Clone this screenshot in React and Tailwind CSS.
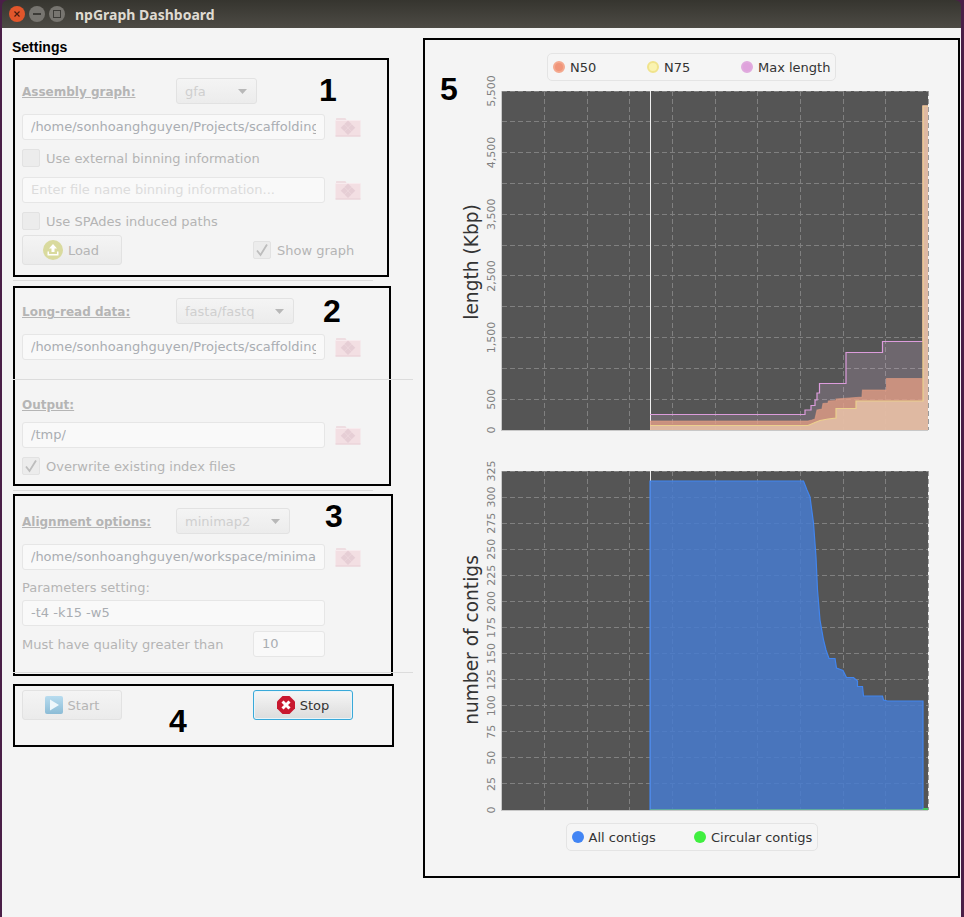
import React from "react";

const UI = "font-['DejaVu_Sans',sans-serif]";

function FolderIcon() {
  return (
    <svg width="26" height="20" viewBox="0 0 26 20" className="ml-[10px] shrink-0">
      <path d="M1 3 L1 1.5 Q1 1 2 1 L10 1 Q11 1 11.5 3 Z" fill="#eedde1" />
      <rect x="0.5" y="3" width="25" height="16.5" rx="1" fill="#f3dfe3" />
      <rect x="0.5" y="3" width="25" height="1" fill="#f8ebee" />
      <rect x="0.5" y="18.5" width="25" height="1" fill="#e8d0d6" />
      <g fill="#e6ced5">
        <rect x="10.5" y="4.5" width="5" height="5" transform="rotate(45 13 7)" />
        <rect x="10.5" y="12" width="5" height="5" transform="rotate(45 13 14.5)" />
        <rect x="6.8" y="8.3" width="5" height="5" transform="rotate(45 9.3 10.8)" />
        <rect x="14.2" y="8.3" width="5" height="5" transform="rotate(45 16.7 10.8)" />
      </g>
    </svg>
  );
}

function Field({ text, placeholder, className = "w-[303px]" }) {
  return (
    <div className={`${className} h-[26px] shrink-0 rounded-[3px] border border-[#e6e6e6] bg-[#f9f9f9] px-[8px] flex items-center overflow-hidden`}>
      <span className={`whitespace-nowrap overflow-hidden text-[13px] ${placeholder ? "text-[#dcdcdc]" : "text-[#a9adb2]"}`}>
        {text}
      </span>
    </div>
  );
}

function Combo({ text, className }) {
  return (
    <div className={`${className} h-[26px] rounded-[3px] border border-[#e2e2e2] bg-gradient-to-b from-[#f4f4f4] to-[#ececec] pl-[8px] pr-[9px] flex items-center justify-between`}>
      <span className="text-[13px] text-[#cfcfcf] pt-[2px]">{text}</span>
      <svg width="9" height="5" viewBox="0 0 9 5"><path d="M0 0H9L4.5 5Z" fill="#b8b8b8" /></svg>
    </div>
  );
}

function Check({ label, checked }) {
  return (
    <div className="flex items-center h-[18px]">
      <div className="w-[18px] h-[18px] rounded-[2px] border border-[#e2e2e2] bg-[#ececec] flex items-center justify-center">
        {checked && (
          <svg width="14" height="14" viewBox="0 0 14 14">
            <path d="M2 7.5 L5.5 12 L12 1.5" fill="none" stroke="#bdbdbd" strokeWidth="1.8" />
          </svg>
        )}
      </div>
      <span className="ml-[6px] pt-[2px] text-[13px] text-[#b4b4b4] whitespace-nowrap">{label}</span>
    </div>
  );
}

function GroupLabel({ text, w }) {
  return (
    <span className={`${w} pt-[2px] text-[12px] font-bold underline text-[#b5b5b5] whitespace-nowrap`}>{text}</span>
  );
}

function Button({ icon, label, focus, className = "" }) {
  return (
    <div
      className={`${className} w-[100px] h-[30px] rounded-[3px] flex items-center justify-center gap-[5px] bg-gradient-to-b ${
        focus
          ? "border border-[#39a9d9] from-[#f6f6f6] to-[#dcdcdc] shadow-[inset_0_0_0_1px_#e8f4f9]"
          : "border border-[#e2e2e2] from-[#f4f4f4] to-[#ebebeb]"
      }`}
    >
      {icon}
      <span className={`pt-[2px] text-[13px] ${focus ? "text-[#333]" : "text-[#b5b5b5]"}`}>{label}</span>
    </div>
  );
}

function LoadIcon() {
  return (
    <svg width="20" height="20" viewBox="0 0 20 20" className="ml-[-2px]">
      <circle cx="10" cy="10" r="10" fill="#d9da9e" />
      <path d="M10 4 L14 8.5 H11.5 V12 H8.5 V8.5 H6 Z" fill="#fff" />
      <path d="M4.5 11.5 H6 V14 H14 V11.5 H15.5 V15.5 H4.5 Z" fill="#fff" />
    </svg>
  );
}

function PlayIcon() {
  return (
    <svg width="18" height="18" viewBox="0 0 18 18">
      <defs>
        <linearGradient id="pl" x1="0" y1="0" x2="0" y2="1">
          <stop offset="0" stopColor="#b8dcef" />
          <stop offset="1" stopColor="#8cbcd6" />
        </linearGradient>
      </defs>
      <rect x="0" y="0" width="18" height="18" rx="2" fill="url(#pl)" />
      <path d="M5 3.5 L14 9 L5 14.5 Z" fill="#eef7fb" />
    </svg>
  );
}

function StopIcon() {
  return (
    <svg width="18" height="18" viewBox="0 0 18 18">
      <path d="M5.5 0 H12.5 L18 5.5 V12.5 L12.5 18 H5.5 L0 12.5 V5.5 Z" fill="#c8182f" />
      <path d="M5.5 5.5 L12.5 12.5 M12.5 5.5 L5.5 12.5" stroke="#fff" strokeWidth="3" />
    </svg>
  );
}

function Num({ children, className }) {
  return (
    <span className={`absolute font-['Liberation_Sans',sans-serif] font-bold text-[32px] leading-none text-black ${className}`}>
      {children}
    </span>
  );
}

function Rule({ className }) {
  return <div className={`h-px bg-[#dcdcdc] ${className}`} />;
}

const VX = [544.5, 587.5, 629.5, 672.5, 715.5, 757.5, 800.5, 843.5, 885.5];

function Grid({ top, bottom, n }) {
  const step = (bottom - top) / n;
  const ys = Array.from({ length: n }, (_, i) => top + step * i);
  return (
    <g stroke="#808080" strokeWidth="1" strokeDasharray="5 3" shapeRendering="crispEdges">
      {ys.map((y) => (
        <line key={y} x1="502" x2="928" y1={y} y2={y} />
      ))}
      {VX.map((x) => (
        <line key={x} x1={x} x2={x} y1={top} y2={bottom} />
      ))}
      <line x1="928" x2="928" y1={top} y2={bottom} stroke="#9a9a9a" />
    </g>
  );
}

function TickLabel({ y, text }) {
  return (
    <text
      x="0"
      y="0"
      transform={`translate(495 ${y}) rotate(-90)`}
      textAnchor="middle"
      fontFamily="'DejaVu Sans', sans-serif"
      fontSize="11"
      fill="#808080"
    >
      {text}
    </text>
  );
}

function AxisTitle({ y, text }) {
  return (
    <text
      x="0"
      y="0"
      transform={`translate(478 ${y}) rotate(-90)`}
      textAnchor="middle"
      fontFamily="'DejaVu Sans', sans-serif"
      fontSize="18.6"
      fill="#333"
    >
      {text}
    </text>
  );
}

const pts = (a) => a.map((p) => p.join(",")).join(" ");

const MAXL = [[650,414.5],[805,414.5],[805,410],[811,410],[811,405.5],[815,405.5],[815,400],[817,400],[817,393],[819.5,393],[819.5,383.5],[846,383.5],[846,352.5],[882.5,352.5],[882.5,341.5],[923,341.5],[923,106],[928,106]];
const N50 = [[650,421],[808,421],[812,420],[815,419],[817,410],[822,409],[823,403.5],[828,403],[828.5,401],[836,400.5],[836,399],[856,397.5],[862,397],[862.5,390],[886.5,390],[886.5,378.5],[923,378.5],[923,106],[928,106]];
const N75 = [[650,425.5],[808,425.5],[815,422.5],[820,420.5],[828,419],[836,418],[836,408.5],[856,408.5],[856,401],[923,401],[923,106],[928,106]];
const BLUE = [[650,810],[650,481],[803.5,481],[807,490],[810,497],[813.5,523],[816,557],[817.5,590],[820,620],[823.5,640],[826,650],[829,658.5],[835,658.5],[836.5,668],[843,670.5],[846.5,677.5],[853.5,677.5],[857.5,681],[857.5,686.5],[862.5,686.5],[863.5,696],[882.5,696],[883.5,700],[887.5,701],[923,701],[923,810]];

function Area({ points, fill, opacity, stroke, bottom = 430, strokeOpacity = 1 }) {
  const first = points[0][0];
  const last = points[points.length - 1][0];
  return (
    <>
      <polygon points={`${first},${bottom} ${pts(points)} ${last},${bottom}`} fill={fill} fillOpacity={opacity} />
      <polyline points={pts(points)} fill="none" stroke={stroke} strokeOpacity={strokeOpacity} strokeWidth="1.2" />
    </>
  );
}

function TopChart() {
  const labels = [["5,500", 91], ["4,500", 152.6], ["3,500", 214.3], ["2,500", 275.9], ["1,500", 337.5], ["500", 399.2], ["0", 430]];
  return (
    <svg width="533" height="370" viewBox="425 81 533 370" className="block overflow-visible">
      <rect x="502" y="91" width="426" height="339" fill="#555555" />
      <Grid top={91} bottom={430} n={11} />
      <line x1="650.5" x2="650.5" y1="91" y2="430" stroke="#f0f0f0" strokeWidth="1" />
      <Area points={MAXL} fill="#f0c8f0" opacity={0.16} stroke="#dc9cdc" />
      <Area points={N50} fill="#e39d84" opacity={0.78} stroke="#e39d84" strokeOpacity={0.6} />
      <Area points={N75} fill="#e6c4ac" opacity={0.78} stroke="#ecd08e" />
      <line x1="502" x2="928" y1="430.5" y2="430.5" stroke="#c8c8c8" />
      <line x1="501.5" x2="501.5" y1="91" y2="431" stroke="#c8c8c8" />
      {labels.map(([t, y]) => <TickLabel key={t} y={y} text={t} />)}
      <AxisTitle y={262} text="length (Kbp)" />
    </svg>
  );
}

function BottomChart() {
  const vals = Array.from({ length: 14 }, (_, i) => i * 25);
  return (
    <svg width="533" height="372" viewBox="425 451 533 372" className="block overflow-visible">
      <rect x="502" y="471" width="426" height="339" fill="#555555" />
      <Grid top={471} bottom={810} n={13} />
      <line x1="650.5" x2="650.5" y1="471" y2="810" stroke="#f0f0f0" strokeWidth="1" />
      <Area points={BLUE} fill="#487bcf" opacity={0.85} stroke="#4285ee" bottom={810} />
      <line x1="650" x2="923" y1="809.5" y2="809.5" stroke="#5fa8a0" />
      <rect x="923" y="808" width="5" height="2" fill="#45c860" />
      <line x1="502" x2="928" y1="810.5" y2="810.5" stroke="#c8c8c8" />
      <line x1="501.5" x2="501.5" y1="471" y2="811" stroke="#c8c8c8" />
      {vals.map((v) => <TickLabel key={v} y={810 - v * (339 / 325)} text={String(v)} />)}
      <AxisTitle y={640} text="number of contigs" />
    </svg>
  );
}

function LegendItem({ color, ring, label, w }) {
  return (
    <div className={`${w} flex items-center`}>
      <span className={`w-3 h-3 rounded-full shrink-0 ${color} ${ring}`} />
      <span className="ml-[5px] pt-[2px] text-[13px] text-[#333] whitespace-nowrap">{label}</span>
    </div>
  );
}

function Legend({ className, children }) {
  return (
    <div className={`${className} mx-auto flex items-center pl-[5px] rounded-[5px] border border-[#e4e4e4] bg-[#f5f5f5]`}>
      {children}
    </div>
  );
}

export default function App() {
  return (
    <div className={`${UI} w-[964px] h-[917px] bg-[#4a1f47] overflow-hidden pl-[2px] pr-[3px]`}>
      <div className="flex items-center h-[28px] rounded-t-[6px] bg-gradient-to-b from-[#36352f] to-[#4d4b45] pl-[7px] mt-0 relative">
        <div className="flex items-center gap-[4px]">
          <span className="w-[16px] h-[16px] rounded-full bg-[#e2562b] flex items-center justify-center">
            <svg width="8" height="8" viewBox="0 0 8 8"><path d="M1.5 1.5 L6.5 6.5 M6.5 1.5 L1.5 6.5" stroke="#4a1d10" strokeWidth="1.2" /></svg>
          </span>
          <span className="w-[16px] h-[16px] rounded-full bg-[#777570] flex items-center justify-center">
            <span className="w-[8px] h-[1.5px] bg-[#3c3b37]" />
          </span>
          <span className="w-[16px] h-[16px] rounded-full bg-[#777570] flex items-center justify-center">
            <span className="w-[8px] h-[8px] border border-[#3c3b37]" />
          </span>
        </div>
        <span className="ml-[10px] font-['Noto_Sans',sans-serif] font-bold text-[14px] text-[#dfdbd2]">npGraph Dashboard</span>
      </div>

      <div className="flex h-[889px] bg-[#f4f4f4]">
        <div className="w-[421px] shrink-0 pl-[11px] relative">
          <div className="h-[30px] flex items-end font-['Liberation_Sans',sans-serif] font-bold text-[14px] text-black">
            <span className="ml-[-1px] leading-[16px] mb-[3px]">Settings</span>
          </div>

          {/* box 1 */}
          <div className="relative w-[376px] h-[219px] border-2 border-black pt-[18px] pl-[7px]">
            <div className="flex items-center h-[26px]">
              <GroupLabel text="Assembly graph:" w="w-[154px]" />
              <Combo text="gfa" className="w-[81px]" />
            </div>
            <div className="mt-[10px] flex items-center">
              <Field text="/home/sonhoanghguyen/Projects/scaffolding" />
              <FolderIcon />
            </div>
            <div className="mt-[9px]"><Check label="Use external binning information" /></div>
            <div className="mt-[10px] flex items-center">
              <Field text="Enter file name binning information..." placeholder />
              <FolderIcon />
            </div>
            <div className="mt-[9px]"><Check label="Use SPAdes induced paths" /></div>
            <div className="mt-[5px] flex items-center">
              <Button icon={<LoadIcon />} label="Load" />
              <div className="ml-[131px]"><Check label="Show graph" checked /></div>
            </div>
            <Num className="left-[304px] top-[14px]">1</Num>
          </div>

          <Rule className="w-[360px] mt-[3px]" />

          {/* box 2 */}
          <div className="relative w-[378px] h-[200px] mt-[5px] border-2 border-black pt-[10px] pl-[7px]">
            <div className="flex items-center h-[26px]">
              <GroupLabel text="Long-read data:" w="w-[154px]" />
              <Combo text="fasta/fastq" className="w-[118px]" />
            </div>
            <div className="mt-[10px] flex items-center">
              <Field text="/home/sonhoanghguyen/Projects/scaffolding" />
              <FolderIcon />
            </div>
            <Rule className="w-[400px] ml-[-9px] mt-[19px] relative" />
            <div className="mt-[16px] h-[16px] flex items-center">
              <GroupLabel text="Output:" w="w-[154px]" />
            </div>
            <div className="mt-[10px] flex items-center">
              <Field text="/tmp/" />
              <FolderIcon />
            </div>
            <div className="mt-[9px]"><Check label="Overwrite existing index files" checked /></div>
            <Num className="left-[308px] top-[7px]">2</Num>
          </div>

          <Rule className="w-[360px] mt-[4px]" />

          {/* box 3 */}
          <div className="relative w-[380px] h-[182px] mt-[3px] border-2 border-black pt-[12px] pl-[7px]">
            <div className="flex items-center h-[26px]">
              <GroupLabel text="Alignment options:" w="w-[154px]" />
              <Combo text="minimap2" className="w-[114px]" />
            </div>
            <div className="mt-[10px] flex items-center">
              <Field text="/home/sonhoanghguyen/workspace/minimap2" />
              <FolderIcon />
            </div>
            <div className="mt-[9px] h-[16px] pt-[2px] flex items-center text-[13px] text-[#b4b4b4]">Parameters setting:</div>
            <div className="mt-[5px]"><Field text="-t4 -k15 -w5" /></div>
            <div className="mt-[5px] flex items-center">
              <span className="w-[231px] pt-[2px] text-[13px] text-[#b4b4b4] whitespace-nowrap">Must have quality greater than</span>
              <Field text="10" className="w-[72px]" />
            </div>
            <Rule className="w-[400px] ml-[-9px] mt-[15px] relative" />
            <Num className="left-[310px] top-[4px]">3</Num>
          </div>

          {/* box 4 */}
          <div className="relative w-[381px] h-[63px] mt-[8px] border-2 border-black pt-[4px] pl-[7px] flex items-start">
            <Button icon={<PlayIcon />} label="Start" />
            <Button icon={<StopIcon />} label="Stop" focus className="ml-[131px]" />
            <Num className="left-[154px] top-[19px]">4</Num>
          </div>
        </div>

        {/* panel 5 */}
        <div className="relative w-[537px] h-[840px] mt-[10px] border-2 border-black pt-[13px]">
          <Legend className="w-[289px] h-[28px]">
            <LegendItem color="bg-[#f0957a]" ring="border-2 border-[#f4a98f]" label="N50" w="w-[94px]" />
            <LegendItem color="bg-[#faf3b0]" ring="border-2 border-[#f0e38c]" label="N75" w="w-[94px]" />
            <LegendItem color="bg-[#dfa3dc]" ring="border-2 border-[#e0aade]" label="Max length" w="w-[90px]" />
          </Legend>
          <TopChart />
          <BottomChart />
          <Legend className="w-[252px] h-[28px]">
            <LegendItem color="bg-[#4285f4]" ring="" label="All contigs" w="w-[122.5px]" />
            <LegendItem color="bg-[#3fef3f]" ring="" label="Circular contigs" w="w-[120px]" />
          </Legend>
          <Num className="left-[15px] top-[33px]">5</Num>
        </div>
      </div>
    </div>
  );
}
